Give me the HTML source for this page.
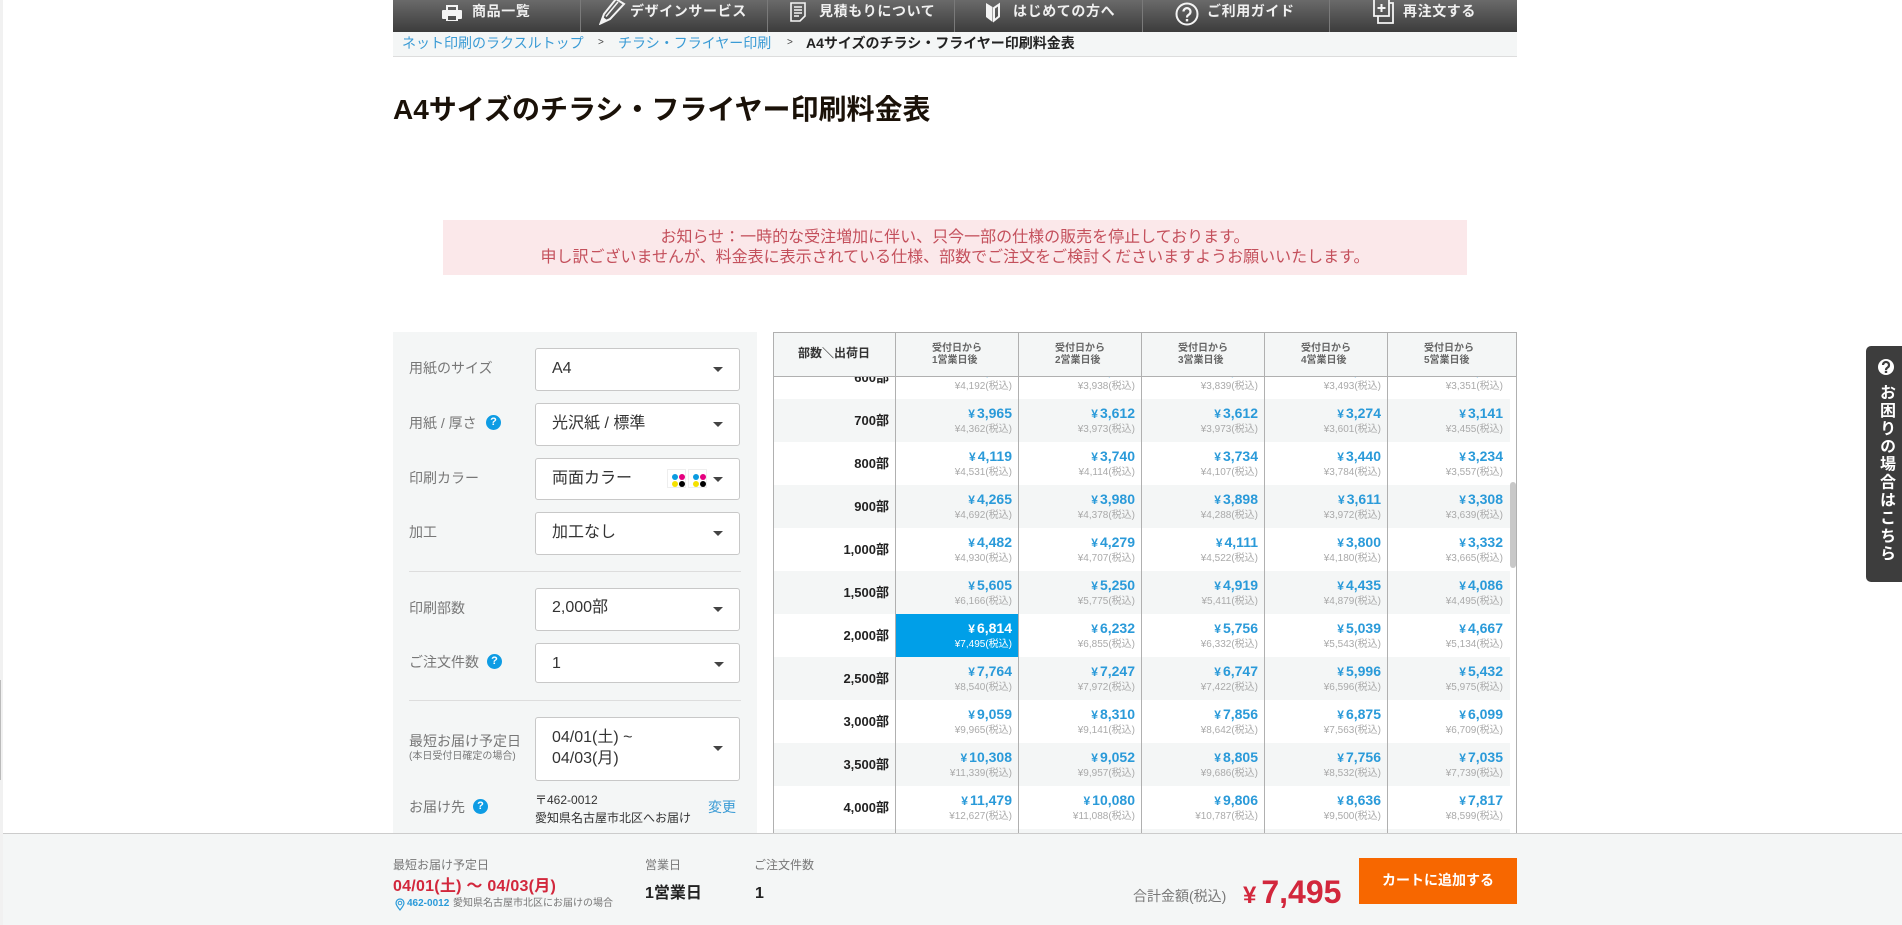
<!DOCTYPE html>
<html lang="ja">
<head>
<meta charset="utf-8">
<title>A4サイズのチラシ・フライヤー印刷料金表</title>
<style>
html,body{margin:0;padding:0;width:1902px;height:925px;overflow:hidden;background:#fff}
body{position:relative;font-family:"Liberation Sans","Noto Sans CJK JP",sans-serif;color:#333}
.a{position:absolute;white-space:nowrap}
.nav{left:393px;top:0;width:1124px;height:32px;background:linear-gradient(#6a6a6a,#3c3c3c)}
.sep{position:absolute;top:0;width:1px;height:32px;background:#7a7a7a}
.nt{top:0;line-height:22px;font-size:14px;font-weight:bold;color:#f0f0f0;letter-spacing:.6px}
.bc{left:393px;top:32px;width:1124px;height:24px;background:#f4f6f6;border-bottom:1px solid #ddd}
.bt{top:33px;line-height:20px;font-size:14px}
.blue{color:#3a9bd5}
.panel{left:393px;top:332px;width:364px;height:501px;background:#f4f6f6}
.lab{left:409px;font-size:14px;line-height:20px;color:#777}
.sel{left:535px;width:205px;background:#fff;border:1px solid #c8c8c8;border-radius:3px;box-sizing:border-box}
.st{left:552px;font-size:16px;line-height:22px;color:#333}
.arr{position:absolute;left:713px;width:0;height:0;border-left:5px solid transparent;border-right:5px solid transparent;border-top:5px solid #444}
.hr{left:409px;width:332px;height:1px;background:#ddd}
.q{width:15px;height:15px;border-radius:50%;background:#0e9ce4;color:#fff;font-size:11px;font-weight:bold;line-height:15px;text-align:center}
.cm{width:19px;height:19px;background:#fff;border:1px solid #eee;box-sizing:border-box}
.cm i{position:absolute;width:6px;height:6px;border-radius:50%}
.tb{left:773px;top:332px;width:744px;height:501px;overflow:hidden}
.th{position:absolute;left:0;top:0;width:744px;height:45px;background:#f4f6f6;box-sizing:border-box;border:1px solid #b0b0b0;z-index:3}
.hc{top:11px;font-size:10px;font-weight:bold;line-height:12px;color:#666;z-index:4}
.body{position:absolute;left:0;top:45px;width:744px;height:456px;overflow:hidden}
.r{position:absolute;left:0;width:737px;height:43px}
.r.g{background:#f4f6f6}
.r>b{position:absolute;right:621px;top:12px;font-size:13px;line-height:20px;color:#222}
.c{position:absolute;top:0;width:123px;height:43px;box-sizing:border-box;text-align:right;padding-right:6px}
.c b{display:block;font-size:14px;line-height:16px;padding-top:6px;color:#2a9ad9}
.c b u{text-decoration:none;font-size:12px;margin-right:2px}
.c s{display:block;text-decoration:none;font-size:10px;line-height:14px;margin-top:1px;color:#aaa}
.c1{left:122px}.c2{left:245px}.c3{left:368px}.c4{left:491px}.c5{left:614px;width:123px;padding-right:7px}
.c.on{background:#009fe8}
.c.on b,.c.on s{color:#fff}
.vl{position:absolute;top:0;width:1px;height:501px;background:#b0b0b0;z-index:5}
.foot{left:3px;top:833px;width:1899px;height:92px;background:#f4f6f6;border-top:1px solid #ccc;box-sizing:border-box;z-index:5}
.f{z-index:6}
</style>
</head>
<body>

<div class="a" style="left:0;top:0;width:3px;height:925px;background:#f1f1f1"></div>
<div class="a" style="left:0;top:680px;width:1px;height:100px;background:#bbb"></div>

<div class="a nav">
<div class="sep" style="left:187px"></div>
<div class="sep" style="left:374px"></div>
<div class="sep" style="left:561px"></div>
<div class="sep" style="left:749px"></div>
<div class="sep" style="left:936px"></div>
</div>

<svg class="a" style="left:441px;top:4px" width="22" height="18" viewBox="0 0 22 18"><path fill="#f4f4f4" d="M5 1h12v5h3a1 1 0 0 1 1 1v7a1 1 0 0 1-1 1h-3v2H5v-2H2a1 1 0 0 1-1-1V7a1 1 0 0 1 1-1h3zM7 3v3h8V3zM7 12v4h8v-4z"/></svg>
<div class="a nt" style="left:472px">商品一覧</div>

<svg class="a" style="left:599px;top:0" width="27" height="25" viewBox="0 0 27 25"><path fill="none" stroke="#f4f4f4" stroke-width="2" d="M1.500 23.500L5 14 17-1l8 5L11 19z"/><path fill="none" stroke="#f4f4f4" stroke-width="1.500" d="M7 16.500L19 2"/><path fill="#f4f4f4" d="M1.500 23.500L4 17l4 3z"/></svg>
<div class="a nt" style="left:630px">デザインサービス</div>

<svg class="a" style="left:789px;top:2px" width="18" height="20" viewBox="0 0 18 20"><path fill="none" stroke="#f4f4f4" stroke-width="1.600" d="M2 1h14v13l-5 5H2zM5 5h8M5 8h8M5 11h8M5 14h5"/></svg>
<div class="a nt" style="left:819px">見積もりについて</div>

<svg class="a" style="left:985px;top:2px" width="16" height="21" viewBox="0 0 16 21"><path fill="#f4f4f4" d="M1 1l6.500 4v15L1 15z"/><path fill="none" stroke="#f4f4f4" stroke-width="2" d="M9 6l5-3.500v12L9 18.500z"/></svg>
<div class="a nt" style="left:1013px">はじめての方へ</div>

<svg class="a" style="left:1175px;top:2px" width="24" height="24" viewBox="0 0 24 24"><circle cx="12" cy="12" r="10.500" fill="none" stroke="#f4f4f4" stroke-width="2"/><path fill="none" stroke="#f4f4f4" stroke-width="2.200" d="M8.500 9.500a3.500 3.500 0 1 1 5.500 3c-1.400 1-2 1.400-2 3"/><rect x="10.800" y="17" width="2.400" height="2.400" fill="#f4f4f4"/></svg>
<div class="a nt" style="left:1207px">ご利用ガイド</div>

<svg class="a" style="left:1372px;top:0" width="23" height="24" viewBox="0 0 23 24"><path fill="none" stroke="#f4f4f4" stroke-width="1.800" d="M2 0v16h15V0M6 16v7h15V3h-4"/><path fill="none" stroke="#f4f4f4" stroke-width="2" d="M9.500 4v8M5.500 8h8"/></svg>
<div class="a nt" style="left:1403px">再注文する</div>

<div class="a bc"></div>
<div class="a bt blue" style="left:402px">ネット印刷のラクスルトップ</div>
<div class="a bt" style="left:598px;font-size:10px;color:#444">&gt;</div>
<div class="a bt blue" style="left:618px">チラシ・フライヤー印刷</div>
<div class="a bt" style="left:787px;font-size:10px;color:#444">&gt;</div>
<div class="a bt" style="left:806px;font-weight:bold;color:#222">A4サイズのチラシ・フライヤー印刷料金表</div>

<div class="a" style="left:393px;top:90px;font-size:28px;line-height:40px;font-weight:bold;color:#1a1108">A4サイズのチラシ・フライヤー印刷料金表</div>

<div class="a" style="left:443px;top:220px;width:1024px;height:55px;background:#fbe8ea;color:#c4505c;font-size:16px;line-height:20px;text-align:center;padding-top:8px;box-sizing:border-box">お知らせ：一時的な受注増加に伴い、只今一部の仕様の販売を停止しております。<br>申し訳ございませんが、料金表に表示されている仕様、部数でご注文をご検討くださいますようお願いいたします。</div>

<div class="a panel"></div>
<div class="a lab" style="top:358px">用紙のサイズ</div>
<div class="a lab" style="top:413px">用紙 / 厚さ</div>
<div class="a q" style="left:486px;top:415px">?</div>
<div class="a lab" style="top:468px">印刷カラー</div>
<div class="a lab" style="top:522px">加工</div>
<div class="a lab" style="top:598px">印刷部数</div>
<div class="a lab" style="top:652px">ご注文件数</div>
<div class="a q" style="left:487px;top:654px">?</div>
<div class="a lab" style="top:731px">最短お届け予定日</div>
<div class="a lab" style="top:750px;font-size:10px;line-height:14px">(本日受付日確定の場合)</div>
<div class="a lab" style="top:797px">お届け先</div>
<div class="a q" style="left:473px;top:799px">?</div>

<div class="a sel" style="top:348px;height:43px"></div><div class="a st" style="top:358px">A4</div><div class="arr" style="top:367px"></div>
<div class="a sel" style="top:403px;height:43px"></div><div class="a st" style="top:413px">光沢紙 / 標準</div><div class="arr" style="top:422px"></div>
<div class="a sel" style="top:458px;height:42px"></div><div class="a st" style="top:468px">両面カラー</div><div class="arr" style="top:477px"></div>
<div class="a cm" style="left:667px;top:469px"><i style="left:4px;top:4px;background:#0a9be0"></i><i style="left:11px;top:4px;background:#e5007f"></i><i style="left:4px;top:11px;background:#f5e100"></i><i style="left:11px;top:11px;background:#000"></i></div>
<div class="a cm" style="left:688px;top:469px"><i style="left:4px;top:4px;background:#0a9be0"></i><i style="left:11px;top:4px;background:#e5007f"></i><i style="left:4px;top:11px;background:#f5e100"></i><i style="left:11px;top:11px;background:#000"></i></div>
<div class="a sel" style="top:512px;height:43px"></div><div class="a st" style="top:522px">加工なし</div><div class="arr" style="top:531px"></div>
<div class="a hr" style="top:571px"></div>
<div class="a sel" style="top:588px;height:43px"></div><div class="a st" style="top:597px">2,000部</div><div class="arr" style="top:607px"></div>
<div class="a sel" style="top:643px;height:40px"></div><div class="a st" style="top:653px">1</div><div class="arr" style="top:662px;left:714px"></div>
<div class="a hr" style="top:700px"></div>
<div class="a sel" style="top:717px;height:64px"></div><div class="a st" style="top:727px;line-height:21px">04/01(土) ~<br>04/03(月)</div><div class="arr" style="top:746px"></div>
<div class="a" style="left:535px;top:791px;font-size:12px;line-height:18px;color:#333">〒462-0012<br>愛知県名古屋市北区へお届け</div>
<div class="a blue" style="left:708px;top:797px;font-size:14px;line-height:20px">変更</div>

<div class="a tb">
<div class="th"></div>
<div class="a" style="left:0;width:122px;top:11px;text-align:center;font-size:12px;font-weight:bold;line-height:20px;color:#333;z-index:4">部数＼出荷日</div>
<div class="a hc" style="left:159px">受付日から<br>1営業日後</div>
<div class="a hc" style="left:282px">受付日から<br>2営業日後</div>
<div class="a hc" style="left:405px">受付日から<br>3営業日後</div>
<div class="a hc" style="left:528px">受付日から<br>4営業日後</div>
<div class="a hc" style="left:651px">受付日から<br>5営業日後</div>

<div class="body">
<div class="r" style="top:-21px"><b>600部</b><div class="c c1"><b><u>¥</u>3,811</b><s>¥4,192(税込)</s></div><div class="c c2"><b><u>¥</u>3,580</b><s>¥3,938(税込)</s></div><div class="c c3"><b><u>¥</u>3,490</b><s>¥3,839(税込)</s></div><div class="c c4"><b><u>¥</u>3,175</b><s>¥3,493(税込)</s></div><div class="c c5"><b><u>¥</u>3,046</b><s>¥3,351(税込)</s></div></div>
<div class="r g" style="top:22px"><b>700部</b><div class="c c1"><b><u>¥</u>3,965</b><s>¥4,362(税込)</s></div><div class="c c2"><b><u>¥</u>3,612</b><s>¥3,973(税込)</s></div><div class="c c3"><b><u>¥</u>3,612</b><s>¥3,973(税込)</s></div><div class="c c4"><b><u>¥</u>3,274</b><s>¥3,601(税込)</s></div><div class="c c5"><b><u>¥</u>3,141</b><s>¥3,455(税込)</s></div></div>
<div class="r" style="top:65px"><b>800部</b><div class="c c1"><b><u>¥</u>4,119</b><s>¥4,531(税込)</s></div><div class="c c2"><b><u>¥</u>3,740</b><s>¥4,114(税込)</s></div><div class="c c3"><b><u>¥</u>3,734</b><s>¥4,107(税込)</s></div><div class="c c4"><b><u>¥</u>3,440</b><s>¥3,784(税込)</s></div><div class="c c5"><b><u>¥</u>3,234</b><s>¥3,557(税込)</s></div></div>
<div class="r g" style="top:108px"><b>900部</b><div class="c c1"><b><u>¥</u>4,265</b><s>¥4,692(税込)</s></div><div class="c c2"><b><u>¥</u>3,980</b><s>¥4,378(税込)</s></div><div class="c c3"><b><u>¥</u>3,898</b><s>¥4,288(税込)</s></div><div class="c c4"><b><u>¥</u>3,611</b><s>¥3,972(税込)</s></div><div class="c c5"><b><u>¥</u>3,308</b><s>¥3,639(税込)</s></div></div>
<div class="r" style="top:151px"><b>1,000部</b><div class="c c1"><b><u>¥</u>4,482</b><s>¥4,930(税込)</s></div><div class="c c2"><b><u>¥</u>4,279</b><s>¥4,707(税込)</s></div><div class="c c3"><b><u>¥</u>4,111</b><s>¥4,522(税込)</s></div><div class="c c4"><b><u>¥</u>3,800</b><s>¥4,180(税込)</s></div><div class="c c5"><b><u>¥</u>3,332</b><s>¥3,665(税込)</s></div></div>
<div class="r g" style="top:194px"><b>1,500部</b><div class="c c1"><b><u>¥</u>5,605</b><s>¥6,166(税込)</s></div><div class="c c2"><b><u>¥</u>5,250</b><s>¥5,775(税込)</s></div><div class="c c3"><b><u>¥</u>4,919</b><s>¥5,411(税込)</s></div><div class="c c4"><b><u>¥</u>4,435</b><s>¥4,879(税込)</s></div><div class="c c5"><b><u>¥</u>4,086</b><s>¥4,495(税込)</s></div></div>
<div class="r" style="top:237px"><b>2,000部</b><div class="c c1 on"><b><u>¥</u>6,814</b><s>¥7,495(税込)</s></div><div class="c c2"><b><u>¥</u>6,232</b><s>¥6,855(税込)</s></div><div class="c c3"><b><u>¥</u>5,756</b><s>¥6,332(税込)</s></div><div class="c c4"><b><u>¥</u>5,039</b><s>¥5,543(税込)</s></div><div class="c c5"><b><u>¥</u>4,667</b><s>¥5,134(税込)</s></div></div>
<div class="r g" style="top:280px"><b>2,500部</b><div class="c c1"><b><u>¥</u>7,764</b><s>¥8,540(税込)</s></div><div class="c c2"><b><u>¥</u>7,247</b><s>¥7,972(税込)</s></div><div class="c c3"><b><u>¥</u>6,747</b><s>¥7,422(税込)</s></div><div class="c c4"><b><u>¥</u>5,996</b><s>¥6,596(税込)</s></div><div class="c c5"><b><u>¥</u>5,432</b><s>¥5,975(税込)</s></div></div>
<div class="r" style="top:323px"><b>3,000部</b><div class="c c1"><b><u>¥</u>9,059</b><s>¥9,965(税込)</s></div><div class="c c2"><b><u>¥</u>8,310</b><s>¥9,141(税込)</s></div><div class="c c3"><b><u>¥</u>7,856</b><s>¥8,642(税込)</s></div><div class="c c4"><b><u>¥</u>6,875</b><s>¥7,563(税込)</s></div><div class="c c5"><b><u>¥</u>6,099</b><s>¥6,709(税込)</s></div></div>
<div class="r g" style="top:366px"><b>3,500部</b><div class="c c1"><b><u>¥</u>10,308</b><s>¥11,339(税込)</s></div><div class="c c2"><b><u>¥</u>9,052</b><s>¥9,957(税込)</s></div><div class="c c3"><b><u>¥</u>8,805</b><s>¥9,686(税込)</s></div><div class="c c4"><b><u>¥</u>7,756</b><s>¥8,532(税込)</s></div><div class="c c5"><b><u>¥</u>7,035</b><s>¥7,739(税込)</s></div></div>
<div class="r" style="top:409px"><b>4,000部</b><div class="c c1"><b><u>¥</u>11,479</b><s>¥12,627(税込)</s></div><div class="c c2"><b><u>¥</u>10,080</b><s>¥11,088(税込)</s></div><div class="c c3"><b><u>¥</u>9,806</b><s>¥10,787(税込)</s></div><div class="c c4"><b><u>¥</u>8,636</b><s>¥9,500(税込)</s></div><div class="c c5"><b><u>¥</u>7,817</b><s>¥8,599(税込)</s></div></div>
<div class="r g" style="top:452px"></div>
<div class="a" style="left:737px;top:105px;width:6px;height:86px;background:#c8c8c8;border-radius:3px"></div>
</div>
<div class="vl" style="left:0"></div>
<div class="vl" style="left:122px"></div>
<div class="vl" style="left:245px"></div>
<div class="vl" style="left:368px"></div>
<div class="vl" style="left:491px"></div>
<div class="vl" style="left:614px"></div>
<div class="vl" style="left:743px"></div>
</div>

<div class="a" style="left:1866px;top:346px;width:36px;height:236px;background:#3d3d3d;border-radius:5px 0 0 5px;z-index:7"></div>
<svg class="a" style="left:1878px;top:359px;z-index:8" width="16" height="16" viewBox="0 0 16 16"><circle cx="8" cy="8" r="8" fill="#fff"/><path fill="none" stroke="#3d3d3d" stroke-width="2.200" d="M5 6a3 3 0 1 1 4.600 2.500C8.500 9.200 8 9.700 8 11"/><rect x="6.800" y="11.800" width="2.400" height="2.200" fill="#3d3d3d"/></svg>
<div class="a" style="left:1875px;top:384px;width:20px;writing-mode:vertical-rl;font-size:16px;line-height:20px;letter-spacing:1.900px;font-weight:bold;color:#fff;z-index:8">お困りの場合はこちら</div>

<div class="a foot"></div>
<div class="a f" style="left:393px;top:856px;font-size:12px;line-height:18px;color:#777">最短お届け予定日</div>
<div class="a f" style="left:393px;top:876px;font-size:16px;line-height:22px;font-weight:bold;letter-spacing:.25px;color:#d2273c">04/01(土) ～ 04/03(月)</div>
<svg class="a f" style="left:395px;top:898px" width="10" height="13" viewBox="0 0 10 13"><path fill="none" stroke="#2a9ad9" stroke-width="1.200" d="M5 12C2.500 9 1 7 1 5a4 4 0 0 1 8 0c0 2-1.500 4-4 7z"/><circle cx="5" cy="5" r="1.800" fill="none" stroke="#2a9ad9"/></svg>
<div class="a f" style="left:407px;top:897px;font-size:10px;line-height:14px;font-weight:bold;color:#2a9ad9">462-0012</div>
<div class="a f" style="left:453px;top:897px;font-size:10px;line-height:14px;color:#777">愛知県名古屋市北区にお届けの場合</div>
<div class="a f" style="left:645px;top:856px;font-size:12px;line-height:18px;color:#777">営業日</div>
<div class="a f" style="left:645px;top:883px;font-size:16px;line-height:22px;font-weight:bold;color:#222">1営業日</div>
<div class="a f" style="left:754px;top:856px;font-size:12px;line-height:18px;color:#777">ご注文件数</div>
<div class="a f" style="left:755px;top:883px;font-size:16px;line-height:22px;font-weight:bold;color:#222">1</div>
<div class="a f" style="left:1133px;top:886px;font-size:14px;line-height:20px;color:#777">合計金額(税込)</div>
<div class="a f" style="left:1243px;top:872px;font-size:32px;line-height:40px;font-weight:bold;color:#d2273c"><span style="font-size:24px;margin-right:5px">¥</span>7,495</div>
<div class="a f" style="left:1359px;top:858px;width:158px;height:46px;background:#f76700;color:#fff;font-size:14px;font-weight:bold;line-height:44px;text-align:center">カートに追加する</div>

</body>
</html>
